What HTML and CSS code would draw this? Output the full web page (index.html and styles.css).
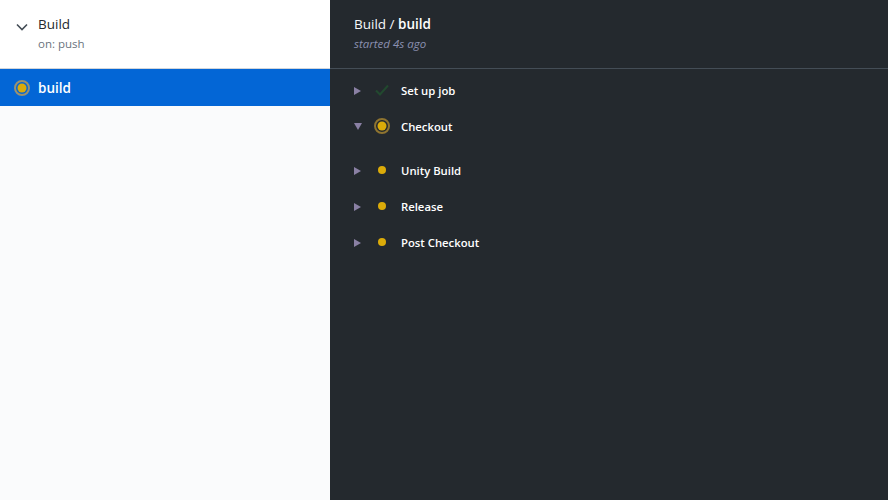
FILE: index.html
```html
<!DOCTYPE html>
<html lang="en">
<head>
  <meta charset="UTF-8" />
  <title>Build / build</title>
  <link rel="stylesheet" href="styles.css">
</head>
<body>
  <aside class="sidebar">
    <div class="workflow">
      <svg class="chevron" width="12" height="8" viewBox="0 0 12 8"><path d="M1 1.5l5 5 5-5" fill="none" stroke="#444d56" stroke-width="1.6"/></svg>
      <div>
        <div class="workflow-name">Build</div>
        <div class="workflow-event">on: push</div>
      </div>
    </div>
    <div class="job">
      <svg class="spinner" width="16" height="16" viewBox="0 0 16 16"><circle cx="8" cy="8" r="7" fill="none" stroke="#9a9270" stroke-width="2"/><circle cx="8" cy="8" r="4.5" fill="#dbab09"/></svg>
      <span>build</span>
    </div>
  </aside>

  <main class="log">
    <header class="log-header">
      <div class="log-title">Build / <b>build</b></div>
      <div class="log-time">started 4s ago</div>
    </header>
    <div class="steps">
      <div class="step">
        <span class="arrow"></span>
        <span class="status"><svg width="14" height="12" viewBox="0 0 14 12"><path d="M1 6.5l4 4 8-9" fill="none" stroke="#22492f" stroke-width="2"/></svg></span>
        <span class="step-name">Set up job</span>
      </div>
      <div class="step step-open">
        <span class="arrow arrow-down"></span>
        <span class="status"><svg width="16" height="16" viewBox="0 0 16 16"><circle cx="8" cy="8" r="7" fill="none" stroke="#8f7430" stroke-width="2"/><circle cx="8" cy="8" r="4.5" fill="#dbab09"/></svg></span>
        <span class="step-name">Checkout</span>
      </div>
      <div class="step">
        <span class="arrow"></span>
        <span class="status"><span class="dot"></span></span>
        <span class="step-name">Unity Build</span>
      </div>
      <div class="step">
        <span class="arrow"></span>
        <span class="status"><span class="dot"></span></span>
        <span class="step-name">Release</span>
      </div>
      <div class="step">
        <span class="arrow"></span>
        <span class="status"><span class="dot"></span></span>
        <span class="step-name">Post Checkout</span>
      </div>
    </div>
  </main>
</body>
</html>
```

FILE: styles.css
```css
* {
  margin: 0;
  padding: 0;
  box-sizing: border-box;
  font-family: 'Open Sans', 'Noto Sans', sans-serif;
}

body {
  display: flex;
  height: 500px;
  overflow: hidden;
  background: #24292e;
}

.sidebar {
  width: 330px;
  background: #fafbfc;
}

.workflow {
  height: 69px;
  background: white;
  border-bottom: 1px solid #d1d5da;
  display: flex;
  align-items: flex-start;
  padding: 14px 0 0 16px;
  gap: 10px;
}

.chevron {
  margin-top: 9px;
}

.workflow-name {
  font-size: 13.5px;
  line-height: 20px;
  color: #24292e;
}

.workflow-event {
  font-size: 11.5px;
  line-height: 20px;
  color: #6a737d;
}

.job {
  height: 37px;
  background: #0366d6;
  color: white;
  display: flex;
  align-items: center;
  padding-left: 14px;
  gap: 8px;
  font-size: 13.5px;
  font-weight: 600;
}

.log {
  flex: 1;
}

.log-header {
  height: 69px;
  border-bottom: 1px solid #444d56;
  padding: 14px 24px 0;
}

.log-title {
  font-size: 13.5px;
  line-height: 20px;
  color: #f6f8fa;
}

.log-title b {
  font-weight: 600;
  color: white;
}

.log-time {
  font-size: 11.5px;
  line-height: 20px;
  font-style: italic;
  color: #8a8fb0;
}

.step {
  height: 36px;
  display: flex;
  align-items: center;
  padding-left: 24px;
}

.steps {
  padding-top: 3px;
}

.step-open {
  margin-bottom: 8px;
}

.arrow {
  width: 0;
  height: 0;
  border-left: 7px solid #8a80a4;
  border-top: 4px solid transparent;
  border-bottom: 4px solid transparent;
  margin: 1px 13px 0 0;
}

.arrow-down {
  border-left: 4px solid transparent;
  border-right: 4px solid transparent;
  border-top: 7px solid #8a80a4;
  border-bottom: 0;
  margin-right: 12px;
}

.status {
  width: 16px;
  display: flex;
  justify-content: center;
  align-items: center;
  margin-right: 11px;
}

.dot {
  width: 8px;
  height: 8px;
  border-radius: 50%;
  background: #dbab09;
  margin-bottom: 1px;
}

.step-name {
  font-size: 11.3px;
  font-weight: 600;
  color: white;
}
```
